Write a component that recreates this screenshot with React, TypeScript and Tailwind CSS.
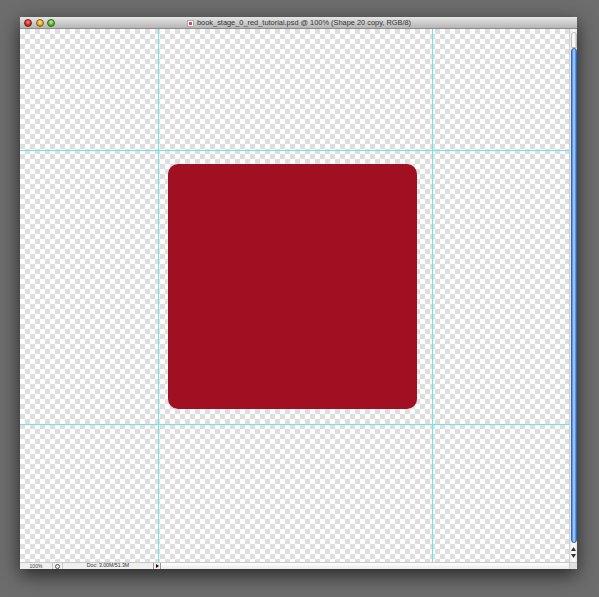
import React from "react";

export default function App() {
  return (
    <div className="w-[599px] h-[597px] bg-[#6d6d6d] pt-[17px] pl-[20px] overflow-hidden font-['Liberation_Sans',Arial,sans-serif]">
      <div className="w-[557px] h-[552px] flex flex-col bg-white shadow-[0_6px_18px_rgba(0,0,0,0.65)]">
        {/* Title bar */}
        <div className="relative h-[12px] flex items-center bg-gradient-to-b from-[#e6e6e6] to-[#b5b5b5] border-b border-[#8c8c8c]">
          <div className="flex items-center gap-[3.5px] pl-[4px]">
            <span className="w-[8px] h-[8px] rounded-full bg-[radial-gradient(circle_at_50%_35%,#ff8a80,#d2231b_60%,#8e1410)] border-[0.5px] border-[#7a1a14]" />
            <span className="w-[8px] h-[8px] rounded-full bg-[radial-gradient(circle_at_50%_35%,#ffe28a,#e6a320_60%,#9a6a10)] border-[0.5px] border-[#8a5e10]" />
            <span className="w-[8px] h-[8px] rounded-full bg-[radial-gradient(circle_at_50%_35%,#c6f29a,#59b02a_60%,#2f6c14)] border-[0.5px] border-[#2f6c14]" />
          </div>
          <div className="absolute left-[167px] top-0 h-[12px] flex items-center gap-[3px]">
            <span className="w-[7px] h-[7px] bg-white border-[0.5px] border-[#aaa] flex items-center justify-center">
              <span className="w-[3px] h-[3px] bg-[#d4496a]" />
            </span>
            <span className="text-[7.4px] leading-none text-[#333] whitespace-nowrap">
              book_stage_0_red_tutorial.psd @ 100% (Shape 20 copy, RGB/8)
            </span>
          </div>
        </div>

        {/* Body */}
        <div className="flex flex-1 min-h-0">
          {/* Canvas */}
          <div className="relative flex-1 bg-[repeating-conic-gradient(#dedede_0_25%,#ffffff_0_50%)] bg-[length:10px_10px] overflow-hidden">
            <div className="absolute left-[148px] top-[135px] w-[249px] h-[245px] rounded-[10px] bg-[#a00f22]" />
            <div className="absolute left-[138px] top-0 bottom-0 w-[1px] bg-[#6fe4ec]" />
            <div className="absolute left-[412px] top-0 bottom-0 w-[1px] bg-[#6fe4ec]" />
            <div className="absolute top-[121px] left-0 right-0 h-[1px] bg-[#6fe4ec]" />
            <div className="absolute top-[395px] left-0 right-0 h-[1px] bg-[#6fe4ec]" />
          </div>
          {/* Vertical scrollbar */}
          <div className="w-[8px] flex flex-col items-center bg-gradient-to-r from-[#e9e9e9] via-white to-[#e4e4e4] border-l border-[#cfcfcf]">
            <div className="mt-[3px] w-[6px] h-[16px] rounded-t-[3px] bg-gradient-to-r from-[#f4f4f4] via-white to-[#cfcfcf] border border-[#bdbdbd]" />
            <div className="w-[6px] flex-1 rounded-[3px] bg-gradient-to-r from-[#3f82e4] via-[#b3d6ff] to-[#3d7cd8] border border-[#2f66bf]" />
            <div className="h-[19px] flex flex-col items-center justify-center gap-[3px]">
              <svg width="5" height="4" viewBox="0 0 5 4"><path d="M2.5 0L5 4H0z" fill="#333" /></svg>
              <svg width="5" height="4" viewBox="0 0 5 4"><path d="M0 0h5L2.5 4z" fill="#333" /></svg>
            </div>
          </div>
        </div>

        {/* Status bar */}
        <div className="h-[7px] flex items-stretch bg-[#efefef] border-t border-[#c8c8c8]">
          <div className="w-[32px] flex items-center justify-center text-[5px] leading-none text-[#444]">100%</div>
          <div className="w-[11px] flex items-center justify-center border-l border-r border-[#c4c4c4]">
            <span className="w-[5px] h-[5px] rounded-full border border-[#555]" />
          </div>
          <div className="w-[90px] flex items-center justify-center text-[5.2px] leading-none text-[#333]">Doc: 3.00M/51.3M</div>
          <div className="w-[8px] flex items-center justify-center border-l border-r border-[#999]">
            <svg width="3" height="4" viewBox="0 0 3 4"><path d="M0 0L3 2L0 4z" fill="#111" /></svg>
          </div>
          <div className="flex-1 bg-gradient-to-b from-white to-[#eaeaea]" />
          <div className="w-[8px] bg-[#e0e0e0] border-l border-[#ccc]" />
        </div>
      </div>
    </div>
  );
}
